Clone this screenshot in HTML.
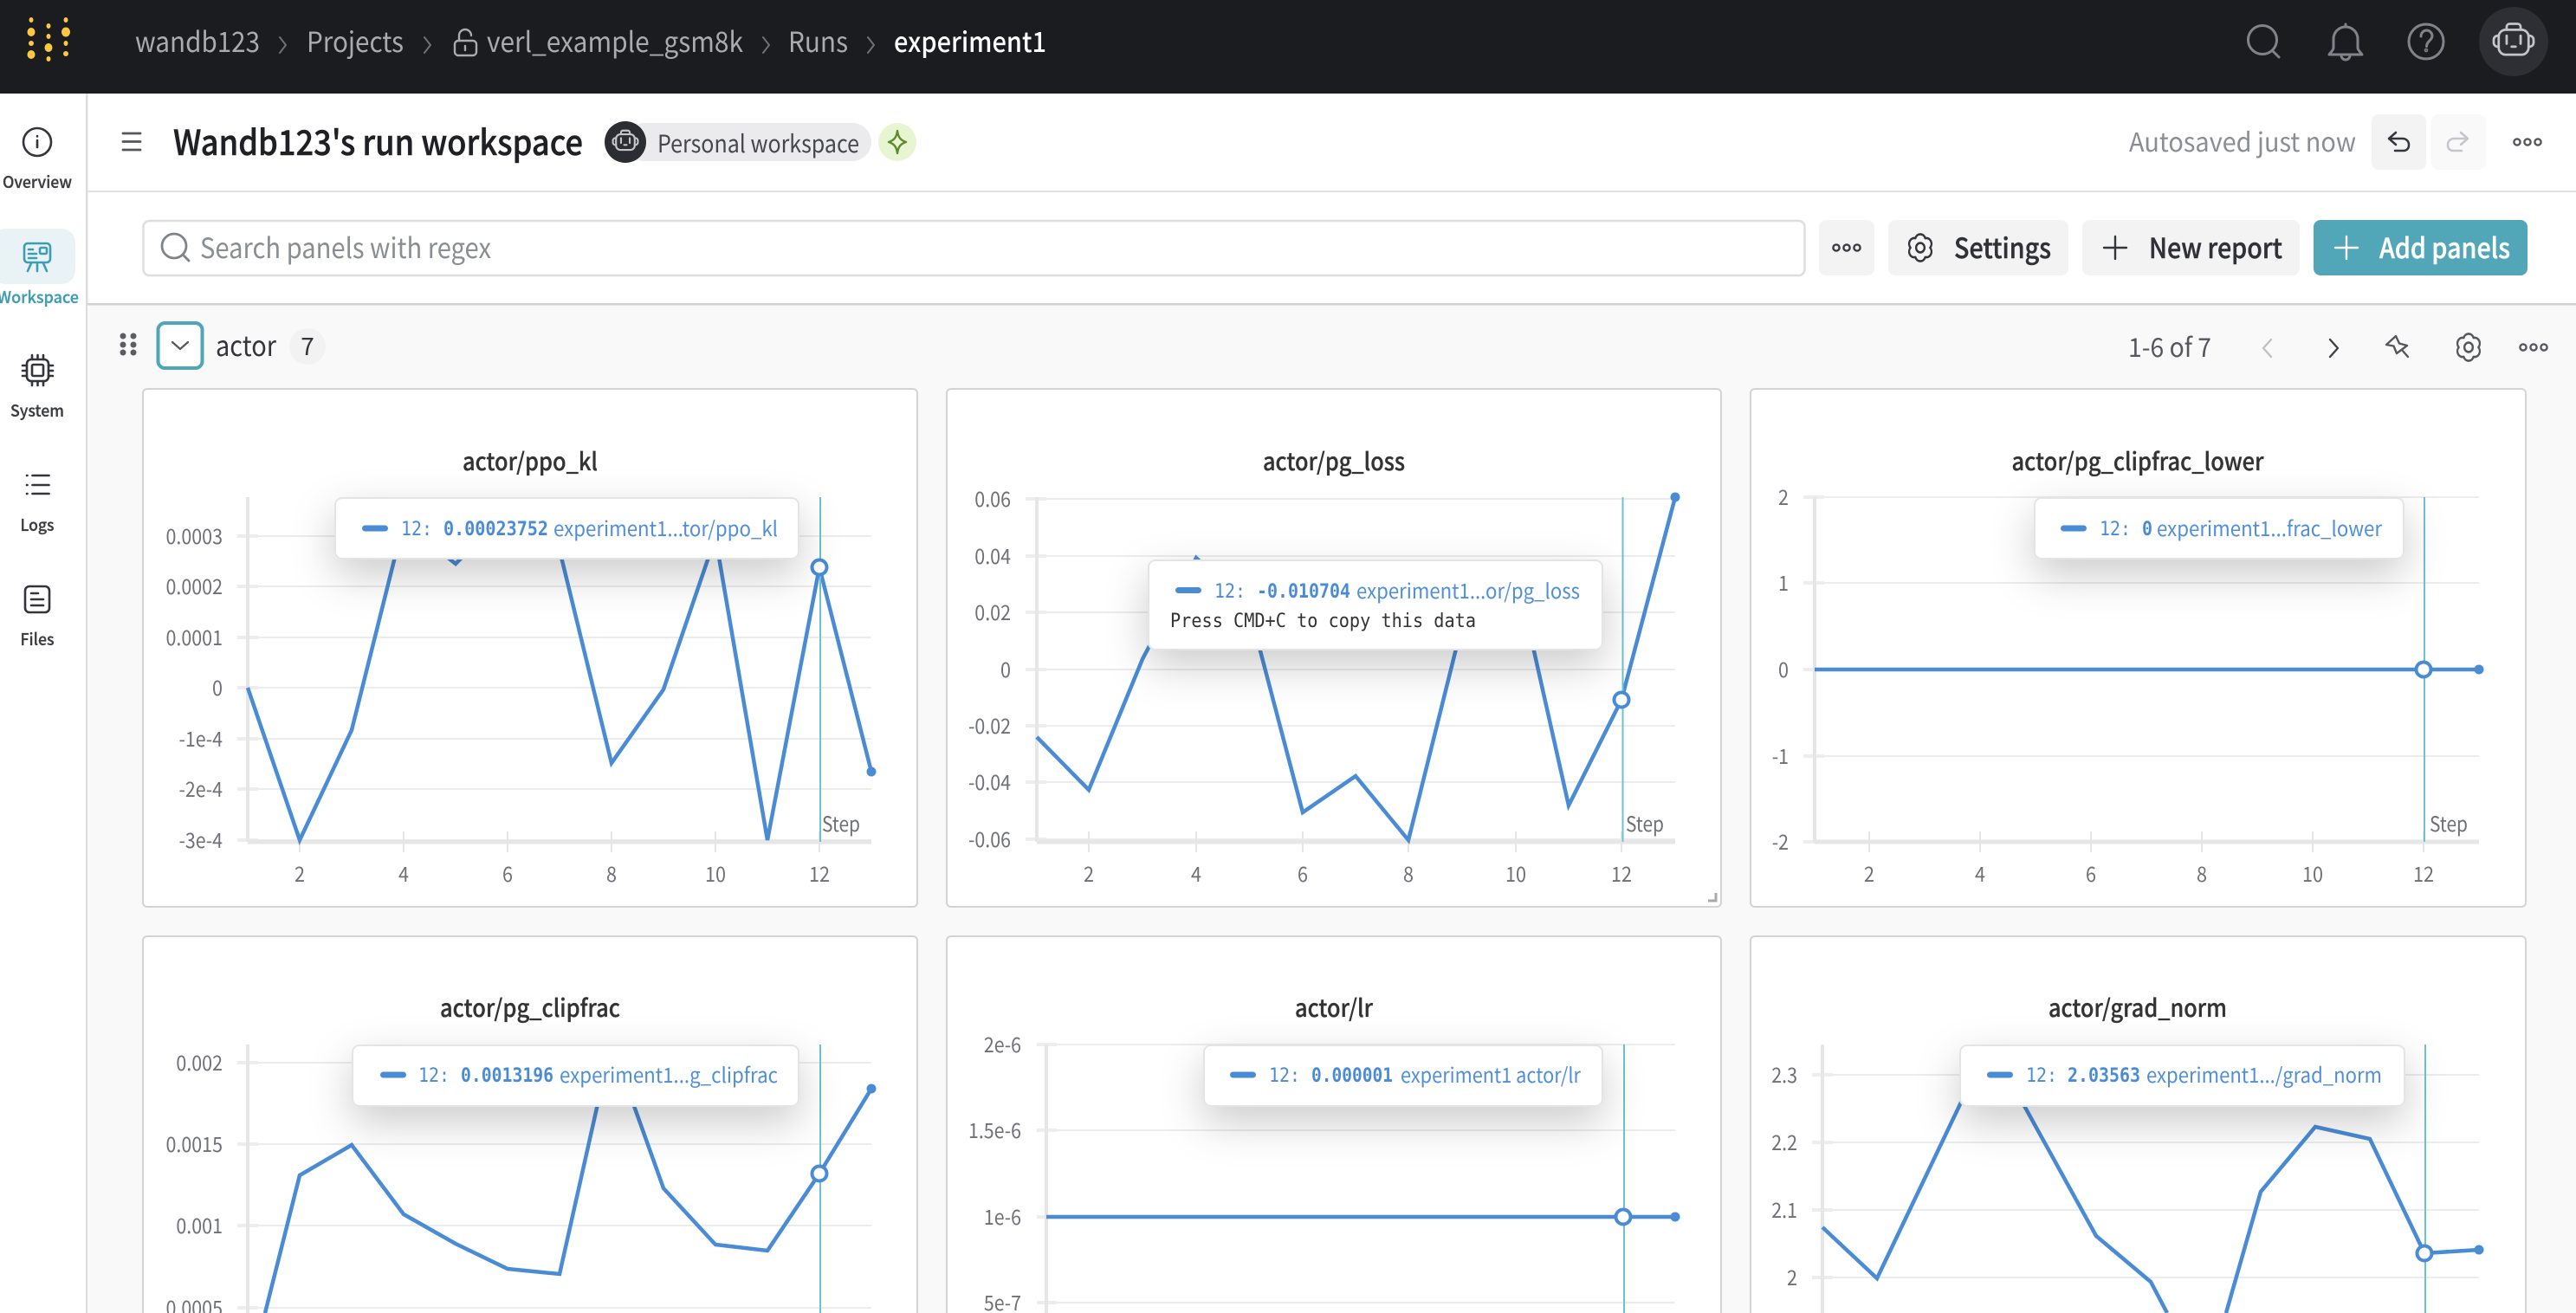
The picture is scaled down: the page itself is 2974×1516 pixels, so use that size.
<!DOCTYPE html>
<html><head><meta charset="utf-8"><title>Wandb123's run workspace</title>
<style>
html,body{margin:0;padding:0;background:#fff;width:2974px;height:1516px;overflow:hidden}
svg{display:block}
text{font-family:"Noto Sans CJK JP","Liberation Sans",sans-serif}
text.m{font-family:"DejaVu Sans Mono","Liberation Mono",monospace;font-size:22px}
.tk{font-size:24px;fill:#6e7076;text-anchor:end}
.xl{font-size:24px;fill:#6e7076;text-anchor:middle}
.ti{font-size:28px;fill:#333;text-anchor:middle;font-weight:500;stroke:#333;stroke-width:.3}
.tt{font-size:24px;fill:#4f8fd9}
.st{font-size:24px;fill:#6e7076}
.side{font-size:19px;font-weight:500;fill:#3b3d43;text-anchor:middle;stroke:#3b3d43;stroke-width:.3}
.grid{stroke:#ececec;stroke-width:2;fill:none}
.tick{stroke:#ededed;stroke-width:4;fill:none}
.vt{stroke:#e6e6e6;stroke-width:2;fill:none}
.ax{stroke:#e6e6e6;fill:none}
.ln{stroke:#4a8bd6;stroke-width:4.5;fill:none;stroke-linejoin:miter}
.tl{stroke:#6cc3cf;stroke-width:2;fill:none}
.hc{stroke:#4a8bd6;stroke-width:4;fill:#fff}
.pn{fill:#fff;stroke:#d4d4d4;stroke-width:2}
.tip{fill:#fff;stroke:#e4e4e4;stroke-width:2}
.ic{fill:none;stroke-linecap:round;stroke-linejoin:round}
.b{stroke-width:.4}
</style></head>
<body>
<svg width="2974" height="1516" viewBox="0 0 2974 1516" xmlns="http://www.w3.org/2000/svg">
<defs>
<filter id="sh" x="-30%" y="-60%" width="160%" height="320%"><feDropShadow dx="0" dy="18" stdDeviation="24" flood-color="#000" flood-opacity=".2"/></filter>
<g id="robot" class="ic"><path d="M-7-11v-3a3 3 0 0 1 3-3h8a3 3 0 0 1 3 3v3"/><rect x="-15" y="-11" width="30" height="25" rx="7"/><path d="M-15-5h-1a4 4 0 0 0-4 4v3a4 4 0 0 0 4 4h1M15-5h1a4 4 0 0 1 4 4v3a4 4 0 0 1-4 4h-1M-7-5v8M7-5v8M-2 6h4"/></g>
<g id="gear" class="ic"><path d="M-5.250-9.100A5.500 5.500 0 0 1 5.250-9.100A5.500 5.500 0 0 1 10.500 0A5.500 5.500 0 0 1 5.250 9.100A5.500 5.500 0 0 1-5.250 9.100A5.500 5.500 0 0 1-10.500 0A5.500 5.500 0 0 1-5.250-9.100Z"/><circle r="4.500"/></g>
<g id="dots" class="ic"><circle cx="-12" r="3.6"/><circle r="3.6"/><circle cx="12" r="3.6"/></g>
</defs>

<rect width="2974" height="1516" fill="#fff"/>
<!-- header -->
<rect width="2974" height="108" fill="#1b1c20"/>
<g fill="#fcc840">
<ellipse cx="36" cy="23" rx="2.5" ry="3"/><ellipse cx="36" cy="37" rx="4.5" ry="5"/><ellipse cx="36" cy="50" rx="3" ry="3"/><ellipse cx="36" cy="63" rx="4.5" ry="5"/>
<ellipse cx="56" cy="30" rx="2.5" ry="3"/><ellipse cx="56" cy="42" rx="2.5" ry="3"/><ellipse cx="56" cy="55" rx="4.5" ry="5"/><ellipse cx="56" cy="68" rx="2.5" ry="3"/>
<ellipse cx="76" cy="23" rx="2.5" ry="3"/><ellipse cx="76" cy="37" rx="5" ry="5.5"/><ellipse cx="76" cy="50" rx="2.5" ry="3"/><ellipse cx="76" cy="62" rx="3" ry="3"/>
</g>
<g font-size="32" fill="#a9abb1">
<text x="156" y="60" textLength="144" lengthAdjust="spacingAndGlyphs">wandb123</text>
<text x="354" y="60" textLength="112" lengthAdjust="spacingAndGlyphs">Projects</text>
<text x="562" y="60" textLength="296" lengthAdjust="spacingAndGlyphs">verl_example_gsm8k</text>
<text x="910" y="60" textLength="69" lengthAdjust="spacingAndGlyphs">Runs</text>
<text x="1032" y="60" textLength="176" lengthAdjust="spacingAndGlyphs" fill="#fff" font-weight="500">experiment1</text>
</g>
<g class="ic" stroke="#6f7177" stroke-width="2"><path d="M323 43l7 9-7 9M490 43l7 9-7 9M881 43l7 9-7 9M1002 43l7 9-7 9"/></g>
<g class="ic" stroke="#a9abb1" stroke-width="2.4"><rect x="525" y="47" width="25" height="17" rx="4"/><path d="M530 47v-6a7 7 0 0 1 14 0M537 53v5"/></g>
<g class="ic" stroke="#80838a" stroke-width="3">
<circle cx="2612" cy="46" r="16.5"/><path d="M2624 59l7 7"/>
<path d="M2708 31a14 14 0 0 0-14 14v10c0 3-3 5-5 8h38c-2-3-5-5-5-8V45a14 14 0 0 0-14-14zM2708 31v-3M2703 64a5 5 0 0 0 10 0"/>
<circle cx="2801" cy="48" r="20"/><path d="M2795 42c0-4 3-7 6.500-7s6.500 3 6.500 6.500c0 5-6.500 6-6.500 12"/><circle cx="2801" cy="58" r=".8"/>
</g>
<circle cx="2902" cy="48" r="40" fill="#2d2f34"/>
<use href="#robot" transform="translate(2902,47) scale(1.15)" stroke="#c3c5cb" stroke-width="2.4"/>

<!-- sidebar -->
<rect x="99" y="108" width="2.500" height="1408" fill="#dcdcdc"/>
<rect x="-10" y="264" width="97" height="64" rx="16" fill="#e9f3f6"/>
<g class="ic" stroke="#33353a" stroke-width="2.600">
<circle cx="43" cy="164" r="16"/><path d="M43 162v8M43 157v.5"/>
<rect x="31" y="415" width="25" height="25" rx="5"/><rect x="37" y="421" width="13" height="13" rx="1.500"/>
<path d="M26 422h5M26 428h5M26 434h5M56 422h5M56 428h5M56 434h5M37 410v5M43.500 410v5M50 410v5M37 440v5M43.500 440v5M50 440v5"/>
<path d="M37.500 549h19M37.500 560h19M37.500 570h19M31 549h.5M31 560h.5M31 570h.5"/>
<rect x="29" y="677" width="28" height="30" rx="5"/><path d="M36 685h8M36 692h14M36 699h14"/>
</g>
<g class="ic" stroke="#3f9db3" stroke-width="2.600">
<rect x="28" y="281" width="30" height="22" rx="4"/><path d="M33 288h5M33 293h9M33 298h9M36 304l-4 9M43 304v9M50 304l4 9"/><rect x="46" y="286" width="8" height="7" rx="1.500"/>
</g>
<text class="side" x="43" y="217" textLength="80" lengthAdjust="spacingAndGlyphs">Overview</text>
<text class="side" x="44" y="350" textLength="94" lengthAdjust="spacingAndGlyphs" style="fill:#3f9db3;stroke:#3f9db3">Workspace</text>
<text class="side" x="43" y="481" textLength="62" lengthAdjust="spacingAndGlyphs">System</text>
<text class="side" x="43" y="613" textLength="39" lengthAdjust="spacingAndGlyphs">Logs</text>
<text class="side" x="43" y="745" textLength="39" lengthAdjust="spacingAndGlyphs">Files</text>

<!-- title row -->
<g class="ic" stroke="#54565c" stroke-width="2.800"><path d="M142 154h20M142 163.500h20M142 173h20"/></g>
<text x="200" y="179" font-size="40" font-weight="500" fill="#1f2024" stroke="#1f2024" stroke-width=".5" textLength="473" lengthAdjust="spacingAndGlyphs">Wandb123's run workspace</text>
<rect x="722" y="142" width="284" height="44" rx="22" fill="#ebebed"/>
<circle cx="722" cy="164" r="24" fill="#2b2d32"/>
<use href="#robot" transform="translate(722,163) scale(.72)" stroke="#c3c5cb" stroke-width="3"/>
<text x="759" y="176" font-size="28" fill="#45474d" textLength="233" lengthAdjust="spacingAndGlyphs">Personal workspace</text>
<rect x="1014" y="142" width="44" height="44" rx="22" fill="#e8f5d3"/>
<path class="ic" stroke="#5c8a2d" stroke-width="2.400" d="M1036 151c1 8 4 11 10 13-6 2-9 5-10 13-1-8-4-11-10-13 6-2 9-5 10-13z"/>
<text x="2458" y="175" font-size="30" fill="#8a8d94" textLength="262" lengthAdjust="spacingAndGlyphs">Autosaved just now</text>
<rect x="2738" y="132" width="63" height="64" rx="8" fill="#f3f3f4"/>
<rect x="2807" y="132" width="63" height="64" rx="8" fill="#f9f9fa"/>
<path class="ic" stroke="#33353a" stroke-width="2.500" d="M2766 153l-8 7 8 7M2758 160h16a7 7 0 0 1 7 7v1a6 6 0 0 1-6 6h-10"/>
<path class="ic" stroke="#c4c6ca" stroke-width="2.500" d="M2841 153l8 7-8 7M2849 160h-16a7 7 0 0 0-7 7v1a6 6 0 0 0 6 6h10"/>
<use href="#dots" transform="translate(2918,164)" stroke="#55575d" stroke-width="2.400"/>
<rect x="101" y="220" width="2873" height="2" fill="#e2e2e2"/>

<!-- search row -->
<rect x="165.500" y="255" width="1918" height="63" rx="7" fill="#fff" stroke="#dedede" stroke-width="2.500"/>
<g class="ic" stroke="#7f8289" stroke-width="2.800"><circle cx="201" cy="284" r="14"/><path d="M212 295l6 6"/></g>
<text x="231" y="298" font-size="32" fill="#8a8d94" textLength="336" lengthAdjust="spacingAndGlyphs">Search panels with regex</text>
<rect x="2100" y="254" width="64" height="64" rx="8" fill="#f3f3f4"/>
<use href="#dots" transform="translate(2132,286)" stroke="#3a3c42" stroke-width="2.400"/>
<rect x="2180" y="254" width="208" height="64" rx="8" fill="#f3f3f4"/>
<use href="#gear" transform="translate(2217,286) scale(1.08,1.2)" stroke="#33353a" stroke-width="2.200"/>
<text x="2256" y="298" font-size="32" font-weight="500" fill="#2f3136" stroke="#2f3136" class="b" textLength="112" lengthAdjust="spacingAndGlyphs">Settings</text>
<rect x="2404" y="254" width="251" height="64" rx="8" fill="#f3f3f4"/>
<path class="ic" stroke="#33353a" stroke-width="2.400" d="M2442 273v26M2429 286h26"/>
<text x="2481" y="298" font-size="32" font-weight="500" fill="#2f3136" stroke="#2f3136" class="b" textLength="154" lengthAdjust="spacingAndGlyphs">New report</text>
<rect x="2671" y="254" width="247" height="64" rx="8" fill="#51a6b8"/>
<path class="ic" stroke="#fff" stroke-width="2.400" d="M2709 273v26M2696 286h26"/>
<text x="2747" y="298" font-size="32" font-weight="500" fill="#fff" stroke="#fff" class="b" textLength="151" lengthAdjust="spacingAndGlyphs">Add panels</text>

<!-- workspace background -->
<rect x="101" y="352" width="2873" height="1164" fill="#f9f9f9"/>
<rect x="101" y="350" width="2873" height="2.500" fill="#d2d2d2"/>
<g fill="#5b5d63"><circle cx="142" cy="388" r="3.500"/><circle cx="154" cy="388" r="3.500"/><circle cx="142" cy="398" r="3.500"/><circle cx="154" cy="398" r="3.500"/><circle cx="142" cy="407" r="3.500"/><circle cx="154" cy="407" r="3.500"/></g>
<rect x="182.500" y="373" width="51" height="52" rx="8" fill="#fff" stroke="#4fa6b8" stroke-width="4"/>
<path class="ic" stroke="#54565c" stroke-width="2.200" d="M199 395l9 8 9-8"/>
<text x="249" y="411" font-size="32" fill="#33353a" textLength="70" lengthAdjust="spacingAndGlyphs">actor</text>
<circle cx="355" cy="400" r="21" fill="#f2f2f2"/>
<text x="355" y="410" font-size="28" fill="#33353a" text-anchor="middle">7</text>
<text x="2457" y="412" font-size="30" fill="#55575d" textLength="96" lengthAdjust="spacingAndGlyphs">1-6 of 7</text>
<path class="ic" stroke="#bfc1c5" stroke-width="2.400" d="M2622 392l-9 10 9 10"/>
<path class="ic" stroke="#3f4146" stroke-width="2.400" d="M2690 392l9 10-9 10"/>
<path class="ic" stroke="#55575d" stroke-width="2.400" d="M2766 388L2755 398L2763.500 399.500L2767 408L2779 399L2770 396.500ZM2773 404L2780 412"/>
<use href="#gear" transform="translate(2850,401) scale(1.08,1.2)" stroke="#55575d" stroke-width="2.200"/>
<use href="#dots" transform="translate(2925,401)" stroke="#55575d" stroke-width="2.400"/>

<!-- PANEL 1 -->
<rect class="pn" x="165" y="449" width="894" height="598" rx="5"/>
<text class="ti" x="612" y="543" textLength="156" lengthAdjust="spacingAndGlyphs">actor/ppo_kl</text>
<path class="grid" d="M286 619H1006M286 677H1006M286 736H1006M286 794H1006M286 853H1006M286 911H1006M286 970H1006"/>
<path class="tick" d="M274 619H298M274 677H298M274 736H298M274 794H298M274 853H298M274 911H298M274 970H298"/>
<path class="vt" d="M346 960V984M466 960V984M586 960V984M706 960V984M826 960V984M946 960V984"/>
<path class="ax" stroke-width="4" d="M286 574V972"/><path class="ax" stroke-width="5" d="M286 972H1006"/>
<g><text class="tk" x="257" y="628" textLength="65.500" lengthAdjust="spacingAndGlyphs">0.0003</text><text class="tk" x="257" y="686" textLength="65.500" lengthAdjust="spacingAndGlyphs">0.0002</text><text class="tk" x="257" y="745" textLength="65.500" lengthAdjust="spacingAndGlyphs">0.0001</text><text class="tk" x="257" y="803" textLength="12" lengthAdjust="spacingAndGlyphs">0</text><text class="tk" x="257" y="862" textLength="50.500" lengthAdjust="spacingAndGlyphs">-1e-4</text><text class="tk" x="257" y="920" textLength="50.500" lengthAdjust="spacingAndGlyphs">-2e-4</text><text class="tk" x="257" y="979" textLength="50.500" lengthAdjust="spacingAndGlyphs">-3e-4</text></g>
<g><text class="xl" x="346" y="1018" textLength="12" lengthAdjust="spacingAndGlyphs">2</text><text class="xl" x="466" y="1018" textLength="12" lengthAdjust="spacingAndGlyphs">4</text><text class="xl" x="586" y="1018" textLength="12" lengthAdjust="spacingAndGlyphs">6</text><text class="xl" x="706" y="1018" textLength="12" lengthAdjust="spacingAndGlyphs">8</text><text class="xl" x="826" y="1018" textLength="24" lengthAdjust="spacingAndGlyphs">10</text><text class="xl" x="946" y="1018" textLength="24" lengthAdjust="spacingAndGlyphs">12</text></g>
<polyline class="ln" points="286,794 346,970 406,843 466,603 526,651 586,590 646,635 706,881 766,796 826,620 886,970 946,655 1006,891"/>
<path class="tl" d="M947 574V972"/>
<circle class="hc" cx="946" cy="655" r="8.500"/><circle cx="1006" cy="891" r="5.500" fill="#4a8bd6"/>
<text class="st" x="949" y="960" textLength="44" lengthAdjust="spacingAndGlyphs">Step</text>
<rect class="tip" x="387" y="575" width="535" height="70" rx="8" filter="url(#sh)"/>
<rect x="418" y="606.500" width="30" height="7" rx="3.500" fill="#4a8bd6"/>
<text class="m" x="463" y="618" fill="#4a8bd6" textLength="36" lengthAdjust="spacingAndGlyphs">12:</text>
<text class="m" x="512" y="618" font-weight="700" fill="#4a8bd6" textLength="121" lengthAdjust="spacingAndGlyphs">0.00023752</text>
<text class="tt" x="639" y="619" textLength="259" lengthAdjust="spacingAndGlyphs">experiment1...tor/ppo_kl</text>

<!-- PANEL 2 -->
<rect class="pn" x="1093" y="449" width="894" height="598" rx="5"/>
<text class="ti" x="1540" y="543" textLength="164" lengthAdjust="spacingAndGlyphs">actor/pg_loss</text>
<path class="grid" d="M1197 576H1934M1197 642H1934M1197 707H1934M1197 773H1934M1197 838H1934M1197 903H1934M1197 969H1934"/>
<path class="tick" d="M1184 576H1208M1184 642H1208M1184 707H1208M1184 773H1208M1184 838H1208M1184 903H1208M1184 969H1208"/>
<path class="vt" d="M1257 960V984M1381 960V984M1504 960V984M1626 960V984M1750 960V984M1872 960V984"/>
<path class="ax" stroke-width="4" d="M1197 574V972"/><path class="ax" stroke-width="5" d="M1197 972H1934"/>
<g><text class="tk" x="1167" y="585" textLength="41.700" lengthAdjust="spacingAndGlyphs">0.06</text><text class="tk" x="1167" y="651" textLength="41.700" lengthAdjust="spacingAndGlyphs">0.04</text><text class="tk" x="1167" y="716" textLength="41.700" lengthAdjust="spacingAndGlyphs">0.02</text><text class="tk" x="1167" y="782" textLength="12" lengthAdjust="spacingAndGlyphs">0</text><text class="tk" x="1167" y="847" textLength="49" lengthAdjust="spacingAndGlyphs">-0.02</text><text class="tk" x="1167" y="912" textLength="49" lengthAdjust="spacingAndGlyphs">-0.04</text><text class="tk" x="1167" y="978" textLength="49" lengthAdjust="spacingAndGlyphs">-0.06</text></g>
<g><text class="xl" x="1257" y="1018" textLength="12" lengthAdjust="spacingAndGlyphs">2</text><text class="xl" x="1381" y="1018" textLength="12" lengthAdjust="spacingAndGlyphs">4</text><text class="xl" x="1504" y="1018" textLength="12" lengthAdjust="spacingAndGlyphs">6</text><text class="xl" x="1626" y="1018" textLength="12" lengthAdjust="spacingAndGlyphs">8</text><text class="xl" x="1750" y="1018" textLength="24" lengthAdjust="spacingAndGlyphs">10</text><text class="xl" x="1872" y="1018" textLength="24" lengthAdjust="spacingAndGlyphs">12</text></g>
<polyline class="ln" points="1197,851 1257,912 1319,761 1381,644 1442,702 1504,938 1565,896 1626,970 1688,721 1750,658 1811,930 1872,808 1934,574"/>
<path class="tl" d="M1873.500 574V972"/>
<circle class="hc" cx="1872" cy="808" r="8.500"/><circle cx="1934" cy="574" r="5.500" fill="#4a8bd6"/>
<text class="st" x="1877" y="960" textLength="44" lengthAdjust="spacingAndGlyphs">Step</text>
<rect class="tip" x="1326" y="647" width="524" height="103" rx="8" filter="url(#sh)"/>
<rect x="1357" y="678" width="30" height="7" rx="3.500" fill="#4a8bd6"/>
<text class="m" x="1402" y="690" fill="#4a8bd6" textLength="36" lengthAdjust="spacingAndGlyphs">12:</text>
<text class="m" x="1451" y="690" font-weight="700" fill="#4a8bd6" textLength="108" lengthAdjust="spacingAndGlyphs">-0.010704</text>
<text class="tt" x="1566" y="691" textLength="258" lengthAdjust="spacingAndGlyphs">experiment1...or/pg_loss</text>
<text class="m" x="1351" y="724" fill="#333" textLength="353" lengthAdjust="spacingAndGlyphs">Press CMD+C to copy this data</text>
<path d="M1981 1031v9h-9" fill="none" stroke="#a9a9a9" stroke-width="3"/>

<!-- PANEL 3 -->
<rect class="pn" x="2021" y="449" width="895" height="598" rx="5"/>
<text class="ti" x="2468" y="543" textLength="291" lengthAdjust="spacingAndGlyphs">actor/pg_clipfrac_lower</text>
<path class="grid" d="M2095 574H2862M2095 673H2862M2095 773H2862M2095 873H2862M2095 972H2862"/>
<path class="tick" d="M2082 574H2106M2082 673H2106M2082 773H2106M2082 873H2106M2082 972H2106"/>
<path class="vt" d="M2158 960V984M2286 960V984M2414 960V984M2542 960V984M2670 960V984M2798 960V984"/>
<path class="ax" stroke-width="4" d="M2095 574V972"/><path class="ax" stroke-width="5" d="M2095 972H2862"/>
<g><text class="tk" x="2065" y="583" textLength="12" lengthAdjust="spacingAndGlyphs">2</text><text class="tk" x="2065" y="682" textLength="12" lengthAdjust="spacingAndGlyphs">1</text><text class="tk" x="2065" y="782" textLength="12" lengthAdjust="spacingAndGlyphs">0</text><text class="tk" x="2065" y="882" textLength="19.300" lengthAdjust="spacingAndGlyphs">-1</text><text class="tk" x="2065" y="981" textLength="19.300" lengthAdjust="spacingAndGlyphs">-2</text></g>
<g><text class="xl" x="2158" y="1018" textLength="12" lengthAdjust="spacingAndGlyphs">2</text><text class="xl" x="2286" y="1018" textLength="12" lengthAdjust="spacingAndGlyphs">4</text><text class="xl" x="2414" y="1018" textLength="12" lengthAdjust="spacingAndGlyphs">6</text><text class="xl" x="2542" y="1018" textLength="12" lengthAdjust="spacingAndGlyphs">8</text><text class="xl" x="2670" y="1018" textLength="24" lengthAdjust="spacingAndGlyphs">10</text><text class="xl" x="2798" y="1018" textLength="24" lengthAdjust="spacingAndGlyphs">12</text></g>
<path class="ln" d="M2095 773H2862"/>
<path class="tl" d="M2799 574V972"/>
<circle class="hc" cx="2798" cy="773" r="8.500"/><circle cx="2862" cy="773" r="5.500" fill="#4a8bd6"/>
<text class="st" x="2805" y="960" textLength="44" lengthAdjust="spacingAndGlyphs">Step</text>
<rect class="tip" x="2349" y="575" width="426" height="70" rx="8" filter="url(#sh)"/>
<rect x="2379" y="606.500" width="30" height="7" rx="3.500" fill="#4a8bd6"/>
<text class="m" x="2424" y="618" fill="#4a8bd6" textLength="36" lengthAdjust="spacingAndGlyphs">12:</text>
<text class="m" x="2473" y="618" font-weight="700" fill="#4a8bd6" textLength="12" lengthAdjust="spacingAndGlyphs">0</text>
<text class="tt" x="2490" y="619" textLength="260" lengthAdjust="spacingAndGlyphs">experiment1...frac_lower</text>

<!-- PANEL 4 -->
<path class="pn" d="M165 1517V1086a5 5 0 0 1 5-5H1054a5 5 0 0 1 5 5V1517"/>
<text class="ti" x="612" y="1174" textLength="208" lengthAdjust="spacingAndGlyphs">actor/pg_clipfrac</text>
<path class="grid" d="M286 1227H1006M286 1321H1006M286 1415H1006M286 1510H1006"/>
<path class="tick" d="M274 1227H298M274 1321H298M274 1415H298M274 1510H298"/>
<path class="ax" stroke-width="4" d="M286 1206V1516"/>
<g><text class="tk" x="257" y="1236" textLength="53.600" lengthAdjust="spacingAndGlyphs">0.002</text><text class="tk" x="257" y="1330" textLength="65.500" lengthAdjust="spacingAndGlyphs">0.0015</text><text class="tk" x="257" y="1424" textLength="53.600" lengthAdjust="spacingAndGlyphs">0.001</text><text class="tk" x="257" y="1519" textLength="65.500" lengthAdjust="spacingAndGlyphs">0.0005</text></g>
<polyline class="ln" points="306,1516 346,1357 406,1322 466,1402 526,1436 586,1465 646,1471 696,1248 722,1249 766,1372 826,1437 886,1444 946,1355 1006,1257"/>
<path class="tl" d="M947 1206V1516"/>
<circle class="hc" cx="946" cy="1355" r="8.500"/><circle cx="1006" cy="1257" r="5.500" fill="#4a8bd6"/>
<rect class="tip" x="407" y="1207" width="515" height="70" rx="8" filter="url(#sh)"/>
<rect x="439" y="1237.500" width="30" height="7" rx="3.500" fill="#4a8bd6"/>
<text class="m" x="483" y="1249" fill="#4a8bd6" textLength="36" lengthAdjust="spacingAndGlyphs">12:</text>
<text class="m" x="532" y="1249" font-weight="700" fill="#4a8bd6" textLength="107" lengthAdjust="spacingAndGlyphs">0.0013196</text>
<text class="tt" x="646" y="1250" textLength="252" lengthAdjust="spacingAndGlyphs">experiment1...g_clipfrac</text>

<!-- PANEL 5 -->
<path class="pn" d="M1093 1517V1086a5 5 0 0 1 5-5H1982a5 5 0 0 1 5 5V1517"/>
<text class="ti" x="1540" y="1174" textLength="90" lengthAdjust="spacingAndGlyphs">actor/lr</text>
<path class="grid" d="M1208 1206H1934M1208 1305H1934M1208 1405H1934M1208 1504H1934"/>
<path class="tick" d="M1197 1206H1220M1197 1305H1220M1197 1405H1220M1197 1504H1220"/>
<path class="ax" stroke-width="4" d="M1208 1206V1516"/>
<g><text class="tk" x="1179" y="1215" textLength="43.100" lengthAdjust="spacingAndGlyphs">2e-6</text><text class="tk" x="1179" y="1314" textLength="61" lengthAdjust="spacingAndGlyphs">1.5e-6</text><text class="tk" x="1179" y="1414" textLength="43.100" lengthAdjust="spacingAndGlyphs">1e-6</text><text class="tk" x="1179" y="1513" textLength="43.100" lengthAdjust="spacingAndGlyphs">5e-7</text></g>
<path class="ln" d="M1208 1405H1934"/>
<path class="tl" d="M1875 1206V1516"/>
<circle class="hc" cx="1874" cy="1405" r="8.500"/><circle cx="1934" cy="1405" r="5.500" fill="#4a8bd6"/>
<rect class="tip" x="1390" y="1207" width="460" height="70" rx="8" filter="url(#sh)"/>
<rect x="1420" y="1237.500" width="30" height="7" rx="3.500" fill="#4a8bd6"/>
<text class="m" x="1465" y="1249" fill="#4a8bd6" textLength="36" lengthAdjust="spacingAndGlyphs">12:</text>
<text class="m" x="1514" y="1249" font-weight="700" fill="#4a8bd6" textLength="94" lengthAdjust="spacingAndGlyphs">0.000001</text>
<text class="tt" x="1617" y="1250" textLength="208" lengthAdjust="spacingAndGlyphs">experiment1 actor/lr</text>

<!-- PANEL 6 -->
<path class="pn" d="M2021 1517V1086a5 5 0 0 1 5-5H2911a5 5 0 0 1 5 5V1517"/>
<text class="ti" x="2468" y="1174" textLength="206" lengthAdjust="spacingAndGlyphs">actor/grad_norm</text>
<path class="grid" d="M2104 1241H2862M2104 1319H2862M2104 1397H2862M2104 1475H2862"/>
<path class="tick" d="M2092 1241H2116M2092 1319H2116M2092 1397H2116M2092 1475H2116"/>
<path class="ax" stroke-width="4" d="M2104 1206V1516"/>
<g><text class="tk" x="2075" y="1250" textLength="29.800" lengthAdjust="spacingAndGlyphs">2.3</text><text class="tk" x="2075" y="1328" textLength="29.800" lengthAdjust="spacingAndGlyphs">2.2</text><text class="tk" x="2075" y="1406" textLength="29.800" lengthAdjust="spacingAndGlyphs">2.1</text><text class="tk" x="2075" y="1484" textLength="12" lengthAdjust="spacingAndGlyphs">2</text></g>
<polyline class="ln" points="2104,1417 2167,1476 2272,1256 2325,1255 2420,1427 2483,1480 2502,1516"/>
<polyline class="ln" points="2570,1516 2610,1376 2673,1301 2736,1315 2799,1447 2862,1443"/>
<path class="tl" d="M2800 1206V1516"/>
<circle class="hc" cx="2799" cy="1447" r="8.500"/><circle cx="2862" cy="1443" r="5.500" fill="#4a8bd6"/>
<rect class="tip" x="2263" y="1207" width="513" height="70" rx="8" filter="url(#sh)"/>
<rect x="2294" y="1237.500" width="30" height="7" rx="3.500" fill="#4a8bd6"/>
<text class="m" x="2339" y="1249" fill="#4a8bd6" textLength="36" lengthAdjust="spacingAndGlyphs">12:</text>
<text class="m" x="2387" y="1249" font-weight="700" fill="#4a8bd6" textLength="84" lengthAdjust="spacingAndGlyphs">2.03563</text>
<text class="tt" x="2478" y="1250" textLength="272" lengthAdjust="spacingAndGlyphs">experiment1.../grad_norm</text>
</svg>
</body></html>
